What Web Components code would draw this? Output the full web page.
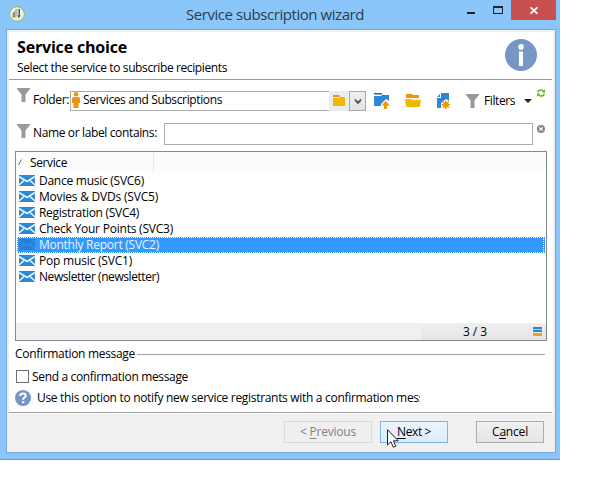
<!DOCTYPE html>
<html lang="en"><head><meta charset="utf-8"><title>Service subscription wizard</title>
<style>
body{margin:0;background:#fff;width:590px;height:490px;overflow:hidden;font:12px/16px "Open Sans","Noto Sans",sans-serif;color:#000}
</style></head><body>
<service-wizard></service-wizard>
<script>
const define=(name,html,after)=>customElements.define(name,class extends HTMLElement{
  connectedCallback(){
    if(this.shadowRoot)return;
    const t=document.createElement('template');t.innerHTML=html;
    this.attachShadow({mode:'open'}).append(t.content.cloneNode(true));
    if(after)after(this,this.shadowRoot);
  }
});

/* Text fitted to a given width by adjusting its letter spacing */
define('fit-text','<style>:host{display:block;flex:none;white-space:pre}span{display:inline-block;white-space:pre}</style><span><slot></slot></span>',(h,r)=>{
  const w=+h.getAttribute('w'),s=r.querySelector('span');
  if(w){const n=s.getBoundingClientRect().width;s.style.letterSpacing=((w-n)/h.textContent.length)+'px';h.style.width=w+'px';}
});

const icons={
 funnel:[13,15,'<path fill="#999" d="M0 0h13v1l-4.500 5.500V14h-4V6.500L0 1z"/>'],
 person:[8,16,'<g fill="#f09609"><circle cx="4" cy="2.300" r="2.300"/><path d="M1.500 5h5Q8 5 8 6.500V11H6.500v5h-5v-5H0V6.500Q0 5 1.500 5z"/></g>'],
 folder:[12,12,'<path fill="#ef9410" d="M0 0h6l1 1v1H0z"/><path fill="#edb800" d="M0 3h6l1-1h5v9H0z"/>'],
 chevron:[8,7,'<path d="M.8.500v2.500L4 6.200l3.200-3.200v-2.500L4 3.200z" fill="#555"/>'],
 up:[16,16,'<path fill="#1c67b2" d="M0 0h8v1.500H0z"/><path fill="#2d87d4" d="M0 3h7l1-1h7v6l-3-2-5 5v2H0z"/><path fill="#f09609" d="M11.500 8L16 12.500h-3V16h-3v-3.500H7.500z"/>'],
 open:[16,13,'<path fill="#ef9410" d="M1 0h6l1 1h6v3H1z"/><path fill="#edb800" d="M0 5h6l1 1h9l-1 6-1 1H2l-1-1z"/>'],
 create:[13,16,'<path fill="#2d87d4" d="M4 0h8v8L9 6 4 10v5H0V5h4z"/><path fill="#2d87d4" d="M0 4L3 1v3z"/><g transform="translate(8.800 11.800)"><circle r="2.600" fill="#f09609"/><g stroke="#f09609" stroke-width="1.500"><path d="M0-4.200V4.200M-4.200 0H4.200M-3-3L3 3M3-3L-3 3"/></g></g>'],
 refresh:[8,8,'<g fill="none" stroke="#62b52e" stroke-width="1.500"><path d="M.8 3.300Q1.400 1 4 1q1.500 0 2.500 1.500M7.200 4.700Q6.600 7 4 7 2.500 7 1.500 5.500"/></g><path fill="#62b52e" d="M8 0v3.500H4.800zM0 8V4.500h3.200z"/>'],
 clear:[8,8,'<circle cx="4" cy="4" r="4" fill="#8b8380"/><path d="M2.300 2.300l3.400 3.400m0-3.400L2.300 5.700" stroke="#fff" stroke-width="1.200"/>'],
 mail:[16,11,'<path fill="#2d87d4" d="M0 0h16v11H0z"/><path fill="none" stroke="#e9f3fc" stroke-width="1.500" d="M0 1.500l8 5L16 1.500M0 10l5-4.500M16 10l-5-4.500"/>'],
 mailon:[16,11,'<path fill="#277fd3" d="M0 0h16v11H0z"/><path fill="none" stroke="#3090ee" stroke-width="1.200" d="M0 1.500l8 5L16 1.500M0 10l5-4.500M16 10l-5-4.500"/>'],
 info:[32,32,'<circle cx="16" cy="16" r="16" fill="#7696c6"/><circle cx="16" cy="7.900" r="2.800" fill="#fff"/><path fill="#fff" d="M14 12.500h4V27h-4z"/>'],
 help:[16,16,'<circle cx="8" cy="8" r="8" fill="#7696c6"/><path fill="none" stroke="#fff" stroke-width="2" d="M5.200 6Q5.300 3.600 8 3.600q2.700 0 2.700 2.200Q10.700 7 9.300 7.700 8.100 8.400 8.100 9.800"/><path fill="#fff" d="M7 11.200h2.200v2H7z"/>'],
 app:[16,16,'<circle cx="8" cy="8" r="7.400" fill="#f1f2ec" stroke="#8cc35a" stroke-width="1.100"/><path fill="#8d8e86" d="M3.500 7L6.500 5v7l-1-1-2 1z"/><path fill="#b4b5ad" d="M5.500 4l3-1.500v7L6.500 12z"/><path fill="#55564f" d="M9.500 3H11v6.500h.8L9.800 12 8.300 9.500h1.200z"/>'],
 min:[8,2,'<path fill="#222" d="M0 0h8v2H0z"/>'],
 max:[10,8,'<path fill="#222" fill-rule="evenodd" d="M0 0h10v8H0zM1 2h8v5H1z"/>'],
 close:[8,7,'<path stroke="#fff" stroke-width="1.700" d="M.6.300l6.800 6.400M7.400.300L.6 6.700"/>'],
 caret:[8,4,'<path fill="#222" d="M0 0h8L4 4z"/>'],
 list:[9,9,'<path fill="#2d87d4" d="M0 0h9v2H0zM0 3h9v2H0z"/><path fill="#9fcbee" d="M0 2h9v1H0z"/><path fill="#f0a01e" d="M0 6h9v3H0z"/>'],
 sort:[4,7,'<path fill="none" stroke="#555" stroke-width=".9" d="M.5 6L3.500.500"/>'],
 cursor:[12,19,'<path fill="#fff" stroke="#222" d="M.5.700V16l3.400-3.300 2.400 5.500 2.500-1-2.400-5.400h4.800z"/>']
};
define('ui-icon','<style>:host{display:block;flex:none}svg{display:block}</style><div></div>',(h,r)=>{
  const [w,t,p]=icons[h.getAttribute('name')];
  r.querySelector('div').innerHTML=`<svg width="${w}" height="${t}" viewBox="0 0 ${w} ${t}">${p}</svg>`;
});

define('title-bar',`<style>
:host{display:flex;height:29px;align-items:flex-start}
.app{margin:6px 0 0 9px}
.t{margin:4px 0 0 161px;font-size:15px;line-height:20px;color:#2c3d4b}
.min{margin:12px 0 0 103px}.max{margin:6px 0 0 18px}
.x{margin-left:8px;width:45px;height:20px;background:#c75050;display:flex;align-items:center;justify-content:center}
.x ui-icon{margin-top:1px}
</style><ui-icon class="app" name="app"></ui-icon><fit-text class="t" w="178">Service subscription wizard</fit-text>
<ui-icon class="min" name="min"></ui-icon><ui-icon class="max" name="max"></ui-icon><div class="x"><ui-icon name="close"></ui-icon></div>`);

define('wizard-header',`<style>
:host{display:flex;height:47px;border-bottom:1px solid #9c9c9c;width:543px;justify-content:space-between;box-sizing:content-box}
.l{padding:5px 0 0 8px}.h{font-size:16px;font-weight:700;line-height:20px}.s{margin-top:3px}
ui-icon{margin:7px 15px 0 0}
</style><div class="l"><fit-text class="h" w="110">Service choice</fit-text><fit-text class="s" w="210">Select the service to subscribe recipients</fit-text></div><ui-icon name="info"></ui-icon>`);

define('folder-bar',`<style>
:host{display:flex;height:43px;align-items:flex-start;padding-left:8px}
.l{margin:12px 0 0 3px}
.in{margin:11px 0 0 1px;width:259px;height:20px;box-sizing:border-box;border:1px solid #abadb3;border-right:0;display:flex;padding-left:1px}
.in fit-text{margin:0 0 0 3px}
.b{margin-top:11px;width:20px;height:20px;box-sizing:border-box;background:#ececec;padding:4px}
.d{margin-top:11px;width:17px;height:20px;box-sizing:border-box;border:1px solid #a5a8ac;background:linear-gradient(#f0f0f0,#e3e3e3);padding:6px 4px}
</style><ui-icon name="funnel" style="margin-top:8px"></ui-icon><fit-text class="l" w="36">Folder:</fit-text>
<div class="in"><ui-icon name="person"></ui-icon><fit-text w="139">Services and Subscriptions</fit-text></div>
<div class="b"><ui-icon name="folder"></ui-icon></div><div class="d"><ui-icon name="chevron"></ui-icon></div>
<ui-icon name="up" style="margin:13px 0 0 8px"></ui-icon><ui-icon name="open" style="margin:14px 0 0 15px"></ui-icon><ui-icon name="create" style="margin:13px 0 0 16px"></ui-icon>
<ui-icon name="funnel" style="margin:14px 0 0 16px"></ui-icon><fit-text w="31" style="margin:13px 0 0 5px">Filters</fit-text><ui-icon name="caret" style="margin:19px 0 0 9px"></ui-icon><ui-icon name="refresh" style="margin:9px 0 0 5px"></ui-icon>`);

define('search-bar',`<style>
:host{display:flex;height:28px;align-items:flex-start;padding-left:8px}
.l{margin:2px 0 0 3px}
.in{margin-left:7px;width:369px;height:22px;box-sizing:border-box;border:1px solid #abadb3}
</style><ui-icon name="funnel" style="margin-top:1px"></ui-icon><fit-text class="l" w="124">Name or label contains:</fit-text><div class="in"></div><ui-icon name="clear" style="margin:2px 0 0 4px"></ui-icon>`);

define('list-row',`<style>
:host{display:flex;height:16px;box-sizing:border-box;align-items:flex-start;padding-left:2px;margin:0 1px}
:host([selected]){background:repeating-linear-gradient(90deg,#fff 0 1px,#3399ff 1px 2px) 0 0/100% 1px no-repeat,repeating-linear-gradient(90deg,#fff 0 1px,#3399ff 1px 2px) 0 100%/100% 1px no-repeat,repeating-linear-gradient(#fff 0 1px,#3399ff 1px 2px) 0 0/1px 100% no-repeat,repeating-linear-gradient(#fff 0 1px,#3399ff 1px 2px) calc(100% - 1px) 0/1px 100% no-repeat,#3399ff;color:#e9f4ff}
div{display:flex}
fit-text{margin:0 0 0 4px}
ui-icon{margin-top:2px}
</style><div></div>`,(h,r)=>{
  r.querySelector('div').innerHTML=`<ui-icon name="${h.hasAttribute('selected')?'mailon':'mail'}"></ui-icon><fit-text w="${h.getAttribute('w')}">${h.innerHTML}</fit-text>`;
});

define('service-list',`<style>
:host{display:flex;flex-direction:column;box-sizing:border-box;margin-left:6px;width:532px;height:190px;border:1px solid #828790}
.h{display:flex;height:21px;background:#fcfcfc}
.c{width:137px;border-right:1px solid #e3edf6;display:flex}
.c ui-icon{margin:7px 0 0 2px}.c fit-text{margin:3px 0 0 8px}
.b{flex:1}
.f{display:flex;height:17px;background:#f0f0f0;justify-content:flex-end}
.p{display:flex;width:125px;background:linear-gradient(#efefef,#e4e4e4)}
.p fit-text{margin:1px 0 0 42px}.p ui-icon{margin:4px 0 0 46px}
</style><div class="h"><div class="c"><ui-icon name="sort"></ui-icon><fit-text w="37">Service</fit-text></div></div>
<div class="b"><list-row w="105">Dance music (SVC6)</list-row><list-row w="119">Movies &amp; DVDs (SVC5)</list-row><list-row w="100">Registration (SVC4)</list-row><list-row w="134">Check Your Points (SVC3)</list-row><list-row w="120" selected>Monthly Report (SVC2)</list-row><list-row w="93">Pop music (SVC1)</list-row><list-row w="120">Newsletter (newsletter)</list-row></div>
<div class="f"><div class="p"><fit-text w="24">3 / 3</fit-text><ui-icon name="list"></ui-icon></div></div>`);

define('confirm-group',`<style>
:host{display:block;height:71px;padding-left:6px}
.g{display:flex;align-items:center;padding-top:5px;height:16px}.g i{width:408px;height:1px;background:#a0a0a0;margin:1px 0 0 2px}
.k{display:flex;margin-top:8px;height:15px}.k i{width:11px;height:11px;border:1px solid #707070;background:#fff;margin-left:1px}.k fit-text{margin:-1px 0 0 3px}
.n{display:flex;margin-top:5px;height:16px}.n div{width:383px;overflow:hidden;margin-left:6px}
</style><div class="g"><fit-text w="120">Confirmation message</fit-text><i></i></div>
<div class="k"><i></i><fit-text w="156">Send a confirmation message</fit-text></div>
<div class="n"><ui-icon name="help"></ui-icon><div><fit-text w="409">Use this option to notify new service registrants with a confirmation message.</fit-text></div></div>`);

define('wizard-button',`<style>
:host{display:flex;box-sizing:border-box;height:22px;border:1px solid #acacac;background:linear-gradient(#f0f0f0,#e5e5e5);justify-content:center;padding-top:2px}
:host([disabled]){border-color:#d9d9d9;background:#efefef;color:#838383}
:host([primary]){border-color:#7eb4ea;background:linear-gradient(#ecf4fc,#dcecfc)}
</style><slot></slot>`);

define('button-bar',`<style>
:host{display:flex;height:39px;box-sizing:border-box;padding:7px 0 0 275px;border-top:1px solid #fff;background:#f0f0f0}
u{text-underline-offset:2px;text-decoration-thickness:1px}
.n{position:relative}.cur{position:absolute;left:6px;top:7px}
</style><wizard-button disabled style="width:88px"><fit-text w="56">&lt; <u>P</u>revious</fit-text></wizard-button>
<wizard-button class="n" primary style="width:68px;margin-left:8px"><fit-text w="34"><u>N</u>ext &gt;</fit-text><ui-icon class="cur" name="cursor"></ui-icon></wizard-button>
<wizard-button style="width:68px;margin-left:28px"><fit-text w="36">C<u>a</u>ncel</fit-text></wizard-button>`);

define('service-wizard',`<style>
:host{display:block;box-sizing:border-box;width:560px;height:460px;background:#8ac6fa;border-bottom:1px solid #659ac9}
.c{box-sizing:border-box;margin-left:6px;width:550px;height:424px;border:1px solid #74a8d8;background:#f0f0f0;padding:2px 2px 0}
.w{background:#fff;height:380px;overflow:hidden}
.z{height:1px;width:543px;background:#a0a0a0}
</style><title-bar></title-bar><div class="c"><div class="w"><wizard-header></wizard-header><folder-bar></folder-bar><search-bar></search-bar><service-list></service-list><confirm-group></confirm-group></div><div class="z"></div><button-bar></button-bar></div>`);
</script></body></html>
